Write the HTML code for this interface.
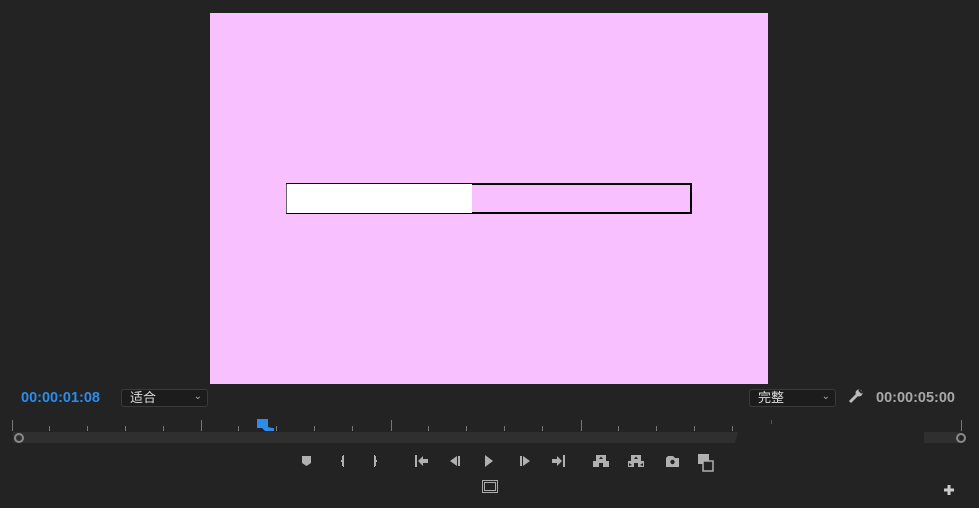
<!DOCTYPE html>
<html><head><meta charset="utf-8"><style>
html,body{margin:0;padding:0;background:#232323;width:979px;height:508px;overflow:hidden;position:relative;font-family:"Liberation Sans","Noto Sans CJK SC",sans-serif}
.a{position:absolute}
.tc{font-weight:bold;font-size:14.5px}
.dd{border:1px solid #3a3a3a;background:#1c1c1c;color:#ddd;font-size:13px;border-radius:3px;height:16px;line-height:16px}
</style></head><body>
<div class="a" style="left:210px;top:13px;width:558px;height:371px;background:#f8c0fe"></div>
<div class="a" style="left:286px;top:183px;width:406px;height:31px;box-sizing:border-box;border:1px solid #555;border-right:2px solid #000;border-top:2px solid #000;border-bottom:2px solid #000;border-left:1px solid #666"></div>
<div class="a" style="left:287px;top:184px;width:185px;height:29px;background:#fff"></div>
<div class="a tc" style="left:21px;top:390px;color:#2d8ceb">00:00:01:08</div>
<div class="a dd" style="left:121px;top:389px;width:85px"><span style="margin-left:8px">适合</span><span style="position:absolute;right:5px;top:-1px;font-size:10px;color:#aaa">&#8964;</span></div>
<div class="a dd" style="left:749px;top:389px;width:85px"><span style="margin-left:8px">完整</span><span style="position:absolute;right:5px;top:-1px;font-size:10px;color:#aaa">&#8964;</span></div>
<div class="a" style="left:848px;top:388px;color:#bbb;font-size:15px">
<svg width="16" height="16" viewBox="0 0 16 16"><path d="M2 14 L9 7" stroke="#bbb" stroke-width="3"/><circle cx="11" cy="5" r="3.5" fill="#bbb"/><path d="M11 2 L14 5" stroke="#232323" stroke-width="2"/></svg></div>
<div class="a tc" style="left:876px;top:390px;color:#a8a8a8">00:00:05:00</div>
<svg class="a" style="left:0;top:415px" width="979" height="35">
<g stroke="#777" stroke-width="1">
<line x1="12.5" y1="5" x2="12.5" y2="16"/><line x1="49.5" y1="11" x2="49.5" y2="16"/><line x1="87.5" y1="11" x2="87.5" y2="16"/><line x1="125.5" y1="11" x2="125.5" y2="16"/><line x1="163.5" y1="11" x2="163.5" y2="16"/>
<line x1="201.5" y1="5" x2="201.5" y2="16"/><line x1="238.5" y1="11" x2="238.5" y2="16"/><line x1="276.5" y1="11" x2="276.5" y2="16"/><line x1="314.5" y1="11" x2="314.5" y2="16"/><line x1="352.5" y1="11" x2="352.5" y2="16"/>
<line x1="391.5" y1="5" x2="391.5" y2="16"/><line x1="428.5" y1="11" x2="428.5" y2="16"/><line x1="466.5" y1="11" x2="466.5" y2="16"/><line x1="504.5" y1="11" x2="504.5" y2="16"/><line x1="542.5" y1="11" x2="542.5" y2="16"/>
<line x1="581.5" y1="5" x2="581.5" y2="16"/><line x1="618.5" y1="11" x2="618.5" y2="16"/><line x1="656.5" y1="11" x2="656.5" y2="16"/><line x1="694.5" y1="11" x2="694.5" y2="16"/><line x1="732.5" y1="11" x2="732.5" y2="16"/>
<line x1="771.5" y1="5" x2="771.5" y2="9" stroke="#555"/><line x1="961.5" y1="5" x2="961.5" y2="16"/>
</g>
<path d="M13 17 H738 L735 28 H13 Z" fill="#2f2f2f"/>
<path d="M924 17 H960 V28 H924 Z" fill="#2f2f2f"/>
<circle cx="19" cy="23" r="4" fill="none" stroke="#8a8a8a" stroke-width="2"/>
<circle cx="961" cy="23" r="4" fill="none" stroke="#8a8a8a" stroke-width="2"/>
<path d="M257 4 H268 V12 L272 13 H274 V16 H265 L262 13 H257 Z" fill="#2d8ceb"/>
</svg>
<svg class="a" style="left:290px;top:450px" width="440" height="24" fill="#b0b0b0">
<path d="M12 6 H21 V13 L16.5 16 L12 13 Z"/>
<path d="M53 6 V16 M53 11 H51 M53 6 H54 M53 16 H54" stroke="#b0b0b0" stroke-width="2"/>
<path d="M85 6 V16 M85 11 H87 M85 6 H84 M85 16 H84" stroke="#b0b0b0" stroke-width="2"/>
<path d="M126 5 V17" stroke="#b0b0b0" stroke-width="2"/><path d="M128 11 L133 6 V9 H138 V13 H133 V16 Z"/>
<path d="M160 11 L167 6 V16 Z"/><rect x="168" y="6" width="2" height="10"/>
<path d="M195 5 L203 11 L195 17 Z"/>
<rect x="230" y="6" width="2" height="10"/><path d="M233 6 L240 11 L233 16 Z"/>
<path d="M262 9 H267 V6 L272 11 L267 16 V13 H262 Z"/><path d="M274 5 V17" stroke="#b0b0b0" stroke-width="2"/>
<path d="M306 5 H316 V11 H319 V17 H313 V13 H309 V17 H303 V11 H306 Z"/><path d="M309 9 L311 6.5 L313 9 Z" fill="#232323"/>
<path d="M341 5 H351 V11 H354 V17 H348 V13 H344 V17 H338 V11 H341 Z"/><path d="M344 9 L346 6.5 L348 9 Z" fill="#232323"/><path d="M339 13 L342 15 L339 16 Z M353 13 L350 15 L353 16Z" fill="#232323"/>
<path d="M376 8 L378 6 H383 L385 8 H389 V17 H376 Z"/><circle cx="382.5" cy="12" r="2.2" fill="#232323"/>
<rect x="408" y="4" width="11" height="10"/><rect x="413" y="11" width="10" height="10" fill="#232323" stroke="#b0b0b0" stroke-width="1.5"/>
</svg>
<div class="a" style="left:482px;top:480px;width:14px;height:11px;border:1px solid #aaa"><div style="margin:1px;width:12px;height:9px;border:1px solid #aaa;box-sizing:border-box"></div></div>
<svg class="a" style="left:943px;top:484px" width="12" height="12"><path d="M1 6 H11 M6 1 V11" stroke="#ccc" stroke-width="3"/></svg>
</body></html>
